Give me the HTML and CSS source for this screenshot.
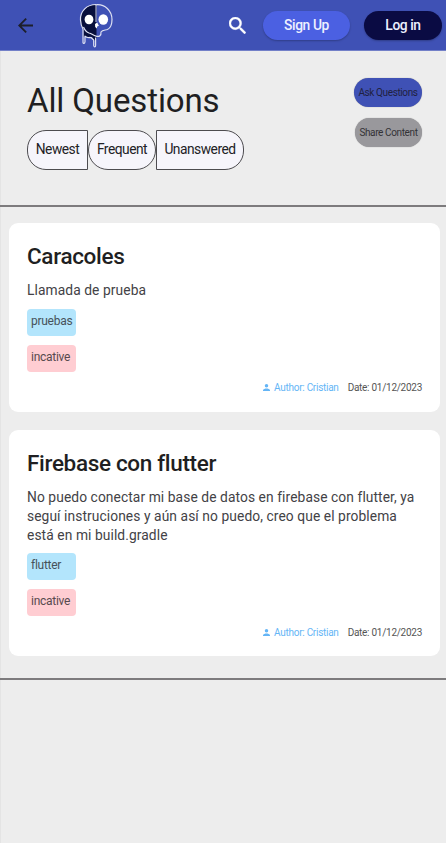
FILE: index.html
```html
<!DOCTYPE html>
<html lang="es">
<head>
<meta charset="utf-8">
<title>All Questions</title>
<link rel="stylesheet" href="styles.css">
</head>
<body>
<header class="bar">
  <svg class="back" viewBox="4 4 16 16"><path d="M20 11H7.83l5.59-5.59L12 4l-8 8 8 8 1.41-1.41L7.83 13H20v-2z"/></svg>
  <svg class="logo" viewBox="0 0 36 46">
    <path class="dark" d="M18 2.500C9 2.500 2.500 9 2.500 18c0 4 .8 6.500 3 9v8l2.500-1 2 2 1.500-1.500 2.500.5 3 4 1.500-3V2.500z"/>
    <path class="line" d="M18 2.500C9 2.500 2 9 2.500 18c.2 4 .8 6 2.500 9v13.500c.4 1.500 1.800 1.300 2 -.8V34c1.500 2 3.500 2 6 1.500l2.700 2.500v5.500c.3 1.800 1.900 1.800 1.900 0v-8"/>
    <path class="line" d="M17.500 2.800C27 1.500 34 9 34 17.500c0 5-1.500 8.500-4.500 10-2.500.8-5 .2-6.500 2.500.3 3.500-1.500 5-5 4.200-3-.6-4-2.600-7-3.200-2.500-.8-4-2.500-5.500-6"/>
    <path class="line thin" d="M18 3v17"/>
    <ellipse class="eye" cx="11" cy="17.500" rx="4.400" ry="4.800"/>
    <ellipse class="eye" cx="25.300" cy="17.500" rx="4.800" ry="5.200"/>
    <path class="eye" d="M17 22l2.200-1.500 1.700 3.200-1.700.8-.4 2-1.600-1.500z"/>
  </svg>
  <svg class="search" viewBox="3 3 17.500 17.500"><path d="M15.500 14h-.79l-.28-.27A6.471 6.471 0 0 0 16 9.500 6.500 6.500 0 1 0 9.500 16c1.610 0 3.090-.59 4.230-1.570l.27.28v.79l5 4.990L20.490 19l-4.990-5zm-6 0C7.010 14 5 11.990 5 9.500S7.010 5 9.500 5 14 7.010 14 9.500 11.990 14 9.500 14z"/></svg>
  <button class="btn signup">Sign Up</button>
  <button class="btn login">Log in</button>
</header>
<section class="head">
  <div>
    <h1>All Questions</h1>
    <div class="filters">
      <button class="filter first">Newest</button>
      <button class="filter mid">Frequent</button>
      <button class="filter last">Unanswered</button>
    </div>
  </div>
  <div class="actions">
    <button class="action ask">Ask Questions</button>
    <button class="action share">Share Content</button>
  </div>
</section>
<main class="list">
  <article class="card">
    <h2>Caracoles</h2>
    <p>Llamada de prueba</p>
    <div class="tags"><span class="tag">pruebas</span><span class="tag off">incative</span></div>
    <div class="meta">
      <svg class="person" viewBox="4 4 16 16"><path d="M12 12a4 4 0 1 0 0-8 4 4 0 0 0 0 8zm0 2c-2.670 0-8 1.340-8 4v2h16v-2c0-2.660-5.330-4-8-4z"/></svg>
      <span class="author">Author: Cristian</span><span class="date">Date: 01/12/2023</span>
    </div>
  </article>
  <article class="card">
    <h2>Firebase con flutter</h2>
    <p>No puedo conectar mi base de datos en firebase con flutter, ya<br>seguí instruciones y aún así no puedo, creo que el problema<br>está en mi build.gradle</p>
    <div class="tags"><span class="tag">flutter</span><span class="tag off">incative</span></div>
    <div class="meta">
      <svg class="person" viewBox="4 4 16 16"><path d="M12 12a4 4 0 1 0 0-8 4 4 0 0 0 0 8zm0 2c-2.670 0-8 1.340-8 4v2h16v-2c0-2.660-5.330-4-8-4z"/></svg>
      <span class="author">Author: Cristian</span><span class="date">Date: 01/12/2023</span>
    </div>
  </article>
</main>
</body>
</html>
```
FILE: styles.css
```css
* { box-sizing: border-box; margin: 0; padding: 0; }
body { background: #ededed; font-family: Roboto, sans-serif; color: #1f1f22; min-height: 843px; box-shadow: inset 1px 0 #e4e4e4; }
button { font-family: inherit; border: 0; white-space: nowrap; flex: none; }
svg { display: block; flex: none; }
.bar { height: 51px; background: #3f51b5; border-bottom: 1px solid #7380c8; display: flex; align-items: center; padding: 0 4px 0 18px; }
.back { width: 15px; height: 15px; fill: #1d1f2b; }
.logo { width: 36px; height: 46px; margin-left: 45px; }
.dark { fill: #080f3c; }
.line { fill: none; stroke: #dde0f2; stroke-width: 1.2; stroke-linejoin: round; }
.thin { stroke-width: .9; }
.eye { fill: #fff; }
.search { width: 17px; height: 17px; fill: #fff; stroke: #fff; stroke-width: .4; margin-left: 115px; }
.btn { height: 29px; border-radius: 15px; color: #eef0ff; font-size: 13.800px; letter-spacing: -.4px; font-weight: 500; box-shadow: 0 1px 2px rgba(0,0,0,.25); }
.signup { width: 87px; margin-left: 17px; background: #4b60e2; }
.login { width: 78px; margin-left: 14px; background: #0a0b43; }
.head { height: 156px; border-bottom: 2px solid #7d7b7d; display: flex; justify-content: space-between; padding: 27px 24px 0 27px; }
h1 { font-size: 33px; letter-spacing: -.12px; font-weight: 400; line-height: 46px; white-space: nowrap; }
.filters { display: flex; margin-top: 6px; }
.filter { height: 40px; border: 1px solid #4d4c50; background: #f6f5fb; font-size: 13.800px; letter-spacing: -.5px; padding-bottom: 2px; color: #222226; }
.first { width: 61px; border-radius: 19px 0 0 19px; }
.mid { width: 68px; border-radius: 20px; }
.last { width: 88px; border-radius: 0 19px 19px 0; }
.actions { display: flex; flex-direction: column; align-items: flex-end; gap: 11px; }
.action { height: 29px; border-radius: 15px; font-size: 10px; letter-spacing: -.38px; color: #1f2140; box-shadow: 0 0 1px rgba(0,0,0,.4); }
.ask { width: 68px; background: #3f51b5; }
.share { width: 67px; background: #99989c; color: #333236; }
.list { padding: 16px 6px 22px 9px; border-bottom: 2px solid #7d7b7d; display: flex; flex-direction: column; gap: 18px; }
.card { background: #fff; border-radius: 9px; padding: 20px 18px 17px; }
.card:first-child { padding-bottom: 18px; }
h2 { font-size: 22.500px; letter-spacing: -.33px; font-weight: 500; line-height: 27px; }
p { font-size: 13.800px; line-height: 19px; letter-spacing: .08px; margin-top: 11px; color: #434246; white-space: nowrap; }
.tags { display: flex; flex-direction: column; gap: 9px; margin-top: 9px; width: 49px; }
.card + .card .tags { margin-top: 8px; }
.tag { height: 27px; border-radius: 4px; background: #b3e5fc; padding: 4px 4px 0; font-size: 12px; line-height: 17px; letter-spacing: -.27px; color: #47525a; white-space: nowrap; }
.off { background: #ffcdd2; color: #574a4e; }
.meta { display: flex; justify-content: flex-end; align-items: center; height: 14px; margin-top: 8px; font-size: 10px; letter-spacing: -.27px; white-space: nowrap; }
.card + .card .meta { margin-top: 9px; }
.person { width: 7px; height: 7px; fill: #64b5f6; margin-right: 4px; }
.author { color: #64b5f6; }
.date { margin-left: 9px; color: #555; }
```
